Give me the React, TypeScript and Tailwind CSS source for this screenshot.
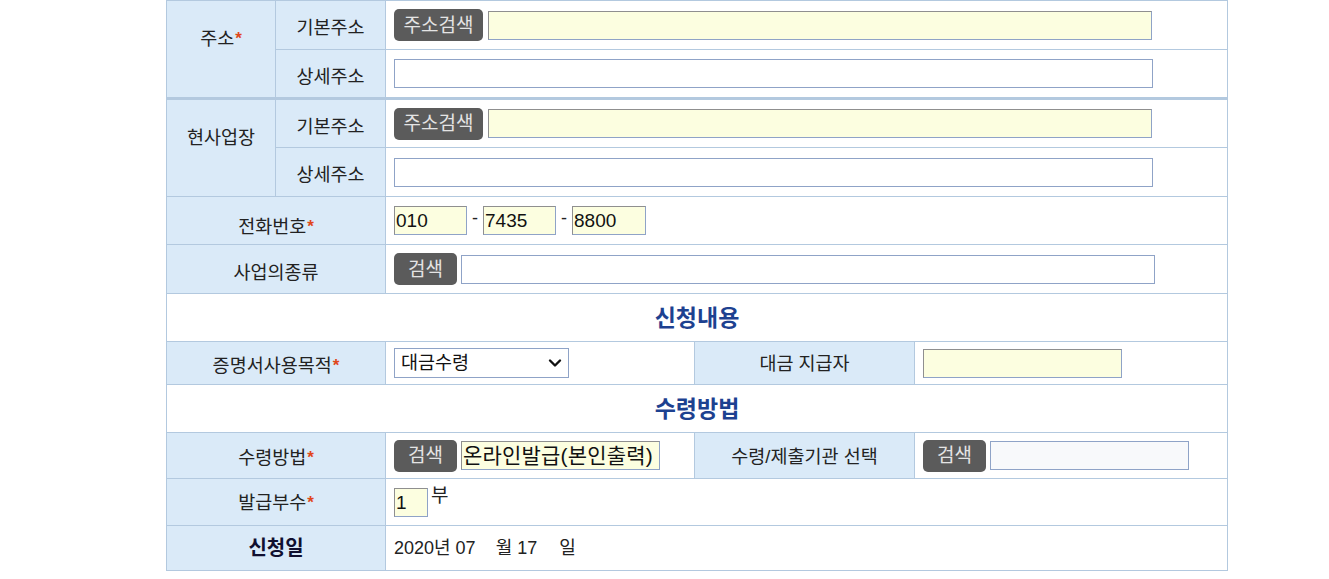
import React from 'react';

const font = { fontFamily: '"Liberation Sans", "Noto Sans CJK KR", sans-serif' };

function Star() {
  return <span className="text-[#e0471b] text-[17px] font-bold relative top-[-1px] ml-[1px]">*</span>;
}

function Btn({ label, w }: { label: string; w: string }) {
  return (
    <button
      type="button"
      className={`${w} h-[32px] shrink-0 rounded-[5px] bg-[#5b5b5b] text-[#e4e4e4] text-[19px] leading-none flex items-center justify-center`}
    >
      {label}
    </button>
  );
}

function Field({
  w,
  yellow,
  value,
  soft,
  big,
}: {
  w: string;
  yellow?: boolean;
  value?: string;
  soft?: boolean;
  big?: boolean;
}) {
  return (
    <div
      className={`${w} h-[29px] shrink-0 border-[1.5px] flex items-center px-[1px] text-[#111] leading-none whitespace-nowrap overflow-hidden ${
        big ? 'text-[21px] tracking-[0.2px]' : 'text-[19px]'
      } ${
        yellow
          ? 'bg-[#fcfee0] border-t-[#8f8f8f] border-l-[#8f8f8f] border-r-[#8fa3c7] border-b-[#8fa3c7]'
          : soft
          ? 'bg-[#f8f9fb] border-[#8fa3c7]'
          : 'bg-white border-[#8fa3c7]'
      }`}
    >
      {value}
    </div>
  );
}

const label = 'bg-[#daeaf8] border border-[#b3c9df] text-center align-middle text-[18.5px] text-[#222]';
const cell = 'bg-white border border-[#b3c9df] align-middle pl-2 text-[18px] text-[#222]';
const head = 'bg-white border border-[#b3c9df] text-center align-middle pt-[2px] text-[23px] font-bold text-[#1d4190]';

export default function App() {
  return (
    <div className="w-[1329px] h-[579px] bg-white overflow-hidden" style={font}>
      <table className="ml-[166px] w-[1061px] table-fixed border-collapse">
        <colgroup>
          <col className="w-[109px]" />
          <col className="w-[110px]" />
          <col className="w-[309px]" />
          <col className="w-[220px]" />
          <col className="w-[313px]" />
        </colgroup>
        <tbody>
          {/* 주소 */}
          <tr className="h-[49px]">
            <td rowSpan={2} className={`${label} pb-[20px] border-b-[3px]`}>
              주소<Star />
            </td>
            <td className={`${label} pt-[6px]`}>기본주소</td>
            <td colSpan={3} className={cell}>
              <div className="flex items-center gap-[5px]">
                <Btn label="주소검색" w="w-[89px]" />
                <Field w="w-[664px]" yellow />
              </div>
            </td>
          </tr>
          <tr className="h-[49px]">
            <td className={`${label} pt-[6px] border-b-[3px]`}>상세주소</td>
            <td colSpan={3} className={`${cell} border-b-[3px]`}>
              <Field w="w-[759px]" />
            </td>
          </tr>

          {/* 현사업장 */}
          <tr className="h-[49px]">
            <td rowSpan={2} className={`${label} pb-[20px]`}>
              현사업장
            </td>
            <td className={`${label} pt-[6px]`}>기본주소</td>
            <td colSpan={3} className={cell}>
              <div className="flex items-center gap-[5px]">
                <Btn label="주소검색" w="w-[89px]" />
                <Field w="w-[664px]" yellow />
              </div>
            </td>
          </tr>
          <tr className="h-[49px]">
            <td className={`${label} pt-[6px]`}>상세주소</td>
            <td colSpan={3} className={cell}>
              <Field w="w-[759px]" />
            </td>
          </tr>

          {/* 전화번호 */}
          <tr className="h-[48px]">
            <td colSpan={2} className={`${label} pt-[12px]`}>
              전화번호<Star />
            </td>
            <td colSpan={3} className={cell}>
              <div className="flex items-center">
                <Field w="w-[73px]" yellow value="010" />
                <span className="mx-[5px] text-[18px] relative top-[-2px]">-</span>
                <Field w="w-[73px]" yellow value="7435" />
                <span className="mx-[5px] text-[18px] relative top-[-2px]">-</span>
                <Field w="w-[74px]" yellow value="8800" />
              </div>
            </td>
          </tr>

          {/* 사업의종류 */}
          <tr className="h-[49px]">
            <td colSpan={2} className={`${label} pt-[7px]`}>
              사업의종류
            </td>
            <td colSpan={3} className={cell}>
              <div className="flex items-center gap-[4px]">
                <Btn label="검색" w="w-[63px]" />
                <Field w="w-[694px]" />
              </div>
            </td>
          </tr>

          {/* 신청내용 */}
          <tr className="h-[48px]">
            <td colSpan={5} className={head}>
              신청내용
            </td>
          </tr>

          <tr className="h-[43px]">
            <td colSpan={2} className={`${label} pt-[5px]`}>
              증명서사용목적<Star />
            </td>
            <td className={cell}>
              <div className="w-[175px] h-[30px] bg-white border-[1.5px] border-[#8fa3c7] flex items-center justify-between pl-[6px] pr-[6px] text-[18.5px] text-[#111]">
                <span>대금수령</span>
                <svg width="14" height="10" viewBox="0 0 14 10" fill="none">
                  <path d="M2 2.5 L7 7.5 L12 2.5" stroke="#111" strokeWidth="2.4" strokeLinecap="round" strokeLinejoin="round" />
                </svg>
              </div>
            </td>
            <td className={`${label} pt-[2px]`}>대금 지급자</td>
            <td className={cell}>
              <Field w="w-[199px]" yellow />
            </td>
          </tr>

          {/* 수령방법 */}
          <tr className="h-[48px]">
            <td colSpan={5} className={head}>
              수령방법
            </td>
          </tr>

          <tr className="h-[46px]">
            <td colSpan={2} className={`${label} pt-[4px]`}>
              수령방법<Star />
            </td>
            <td className={cell}>
              <div className="flex items-center gap-[4px]">
                <Btn label="검색" w="w-[63px]" />
                <Field w="w-[199px]" yellow big value="온라인발급(본인출력)" />
              </div>
            </td>
            <td className={`${label} pt-[2px]`}>수령/제출기관 선택</td>
            <td className={cell}>
              <div className="flex items-center gap-[4px]">
                <Btn label="검색" w="w-[63px]" />
                <Field w="w-[199px]" soft />
              </div>
            </td>
          </tr>

          <tr className="h-[47px]">
            <td colSpan={2} className={`${label} pt-[2px]`}>
              발급부수<Star />
            </td>
            <td colSpan={3} className={cell}>
              <div className="flex items-start">
                <Field w="w-[34px]" yellow value="1" />
                <span className="ml-[3px] text-[19px] leading-none mt-[-2px]">부</span>
              </div>
            </td>
          </tr>

          <tr className="h-[45px]">
            <td colSpan={2} className={`${label} font-bold text-[20px] text-[#101030]`}>
              신청일
            </td>
            <td colSpan={3} className={`${cell} text-[#111]`}>
              <span className="text-[18px]">
                2020년 07
                <span className="inline-block w-[20px]" />
                월 17
                <span className="inline-block w-[22px]" />
                일
              </span>
            </td>
          </tr>
        </tbody>
      </table>
    </div>
  );
}
